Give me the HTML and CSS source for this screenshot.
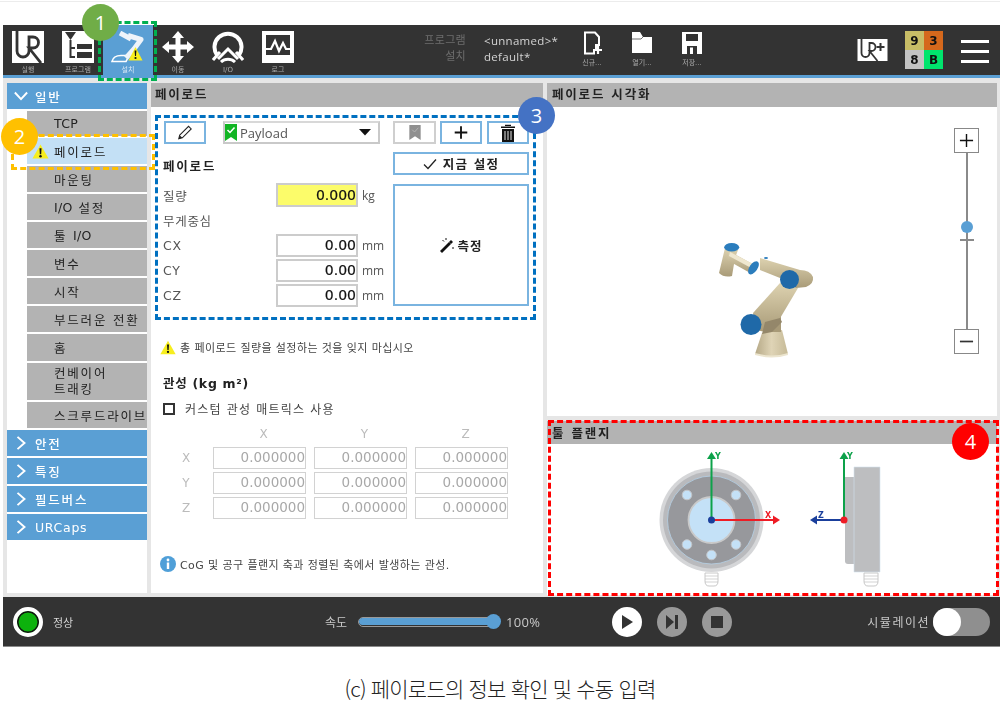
FILE: index.html
```html
<!DOCTYPE html>
<html lang="ko">
<head>
<meta charset="utf-8">
<title>페이로드</title>
<link rel="stylesheet" href="styles.css">
</head>
<body>
<svg class="defs" width="0" height="0">
  <symbol id="warn" viewBox="0 0 18 16">
    <path d="M9 0.500 L17.600 15.500 H0.400 Z" fill="#f7ee1e"/>
    <path d="M7.900 4.600 H10.100 L9.700 10.800 H8.300 Z" fill="#111"/>
    <circle cx="9" cy="13" r="1.300" fill="#111"/>
  </symbol>
  <linearGradient id="tan" x1="0" y1="0" x2="0" y2="1">
    <stop offset="0" stop-color="#ddd2b0"/><stop offset="1" stop-color="#a99b78"/>
  </linearGradient>
  <linearGradient id="tanbase" x1="0" y1="0" x2="1" y2="0">
    <stop offset="0" stop-color="#b5a886"/><stop offset="0.5" stop-color="#dfd4b6"/><stop offset="1" stop-color="#c6ba97"/>
  </linearGradient>
</svg>

<div class="page">
  <div class="app">
    <header class="topbar">
      <nav class="tabs">
        <div class="tab">
          <svg class="tab-icon" viewBox="0 0 32 32"><path d="M0 0H32V32H0Z" fill="#fff"/><path d="M5 -1V20a6 6 0 0 0 12 0V6H21a5.500 5.500 0 0 1 0 11H17L29 32" fill="none" stroke="#333" stroke-width="2.800"/></svg>
          <span>실행</span>
        </div>
        <div class="tab">
          <svg class="tab-icon" viewBox="0 0 32 32"><path d="M0 0H32V32H0Z" fill="#fff"/><path d="M3 1H14L8.500 9Z" fill="#333"/><path d="M8.500 9V26H13M8.500 17H13" fill="none" stroke="#333" stroke-width="2"/><path d="M15 13H30V18H15ZM15 21H30V27H15Z" fill="#333"/></svg>
          <span>프로그램</span>
        </div>
        <div class="tab tab-active">
          <svg class="tab-icon install-icon" viewBox="0 0 34 32"><path d="M1 30.500C2 26 5 24.500 10 24.500H18L15 30.500Z" fill="none" stroke="#fff" stroke-width="1.600"/><path d="M9 2L20 8M17 4.500L30 8.500L23 18L15 27" fill="none" stroke="#eef4fa" stroke-width="5" stroke-linejoin="round"/><path d="M24.500 16L31.500 29.500H17.500Z" fill="#f7ee1e"/><path d="M23.600 19.500H25.400L25 25H24Z" fill="#111"/><circle cx="24.500" cy="27" r="1.100" fill="#111"/></svg>
          <span>설치</span>
        </div>
        <div class="tab">
          <svg class="tab-icon" viewBox="0 0 32 32"><path d="M16 0L22 7H18.500V13.500H25V10L32 16L25 22V18.500H18.500V25H22L16 32L10 25H13.500V18.500H7V22L0 16L7 10V13.500H13.500V7H10Z" fill="#fff"/></svg>
          <span>이동</span>
        </div>
        <div class="tab">
          <svg class="tab-icon" viewBox="0 0 32 32"><path d="M5 24A13.500 13.500 0 1 1 27 24" fill="none" stroke="#fff" stroke-width="4"/><path d="M1 29L8 21M31 29L24 21M6 28L16 18L26 28" fill="none" stroke="#fff" stroke-width="3"/><path d="M9 31a10 10 0 0 1 14 0" fill="none" stroke="#fff" stroke-width="3"/></svg>
          <span>I/O</span>
        </div>
        <div class="tab">
          <svg class="tab-icon" viewBox="0 0 32 32"><path d="M0 0H32V32H0Z" fill="#fff"/><path d="M4 4H28V28H4Z" fill="#333"/><path d="M4 18H9L13 10L17 20L21 12L24 18H28" fill="none" stroke="#fff" stroke-width="2.200"/><path d="M4 24H28V28H4Z" fill="#fff"/></svg>
          <span>로그</span>
        </div>
      </nav>
      <div class="program-info">
        <span class="info-key">프로그램</span><span class="info-val">&lt;unnamed&gt;*</span>
        <span class="info-key">설치</span><span class="info-val">default*</span>
      </div>
      <div class="files">
        <div class="file">
          <svg class="file-icon" viewBox="0 0 24 24"><path d="M5 1.500H15L19 6V14H16V19H14V22.500H5Z" fill="none" stroke="#fff" stroke-width="2"/><path d="M18 15V23M14 19H22" stroke="#fff" stroke-width="2.200"/></svg>
          <span>신규...</span>
        </div>
        <div class="file">
          <svg class="file-icon" viewBox="0 0 24 24"><path d="M2 1H10L13 6H22V22H2Z" fill="#fff"/><path d="M13 6L11 8H2" fill="none" stroke="#333" stroke-width="0.700"/></svg>
          <span>열기...</span>
        </div>
        <div class="file">
          <svg class="file-icon" viewBox="0 0 24 24"><path d="M2 1H22V23H2Z" fill="#fff"/><path d="M6 3H18V10H6Z" fill="#333"/><path d="M7 15H17V23H7Z" fill="#333"/><path d="M10 16.500H13V23H10Z" fill="#fff"/></svg>
          <span>저장...</span>
        </div>
      </div>
      <svg class="urplus" viewBox="0 0 30 24"><path d="M0 1H30V23H0Z" fill="#fff"/><path d="M4 0V15a4 4 0 0 0 8 0V5H14a4 4 0 0 1 0 8H12L20 23" fill="none" stroke="#333" stroke-width="1.800"/><path d="M23 5V13M19 9H27" stroke="#333" stroke-width="2"/></svg>
      <div class="status-grid">
        <span class="cell c-olive">9</span><span class="cell c-orange">3</span>
        <span class="cell c-gray">8</span><span class="cell c-green">B</span>
      </div>
      <div class="burger"><i></i><i></i><i></i></div>
    </header>

    <main class="main">
      <aside class="sidebar">
        <div class="group group-open"><svg class="chev" viewBox="0 0 16 16"><path d="M1 4L8 11.500L15 4" fill="none" stroke="#fff" stroke-width="2.200"/></svg><span>일반</span></div>
        <div class="item item-first"><span class="lat">TCP</span></div>
        <div class="item item-active"><svg class="item-warn"><use href="#warn"/></svg>페이로드</div>
        <div class="item">마운팅</div>
        <div class="item"><span class="lat">I/O</span>&nbsp;설정</div>
        <div class="item">툴&nbsp;<span class="lat">I/O</span></div>
        <div class="item">변수</div>
        <div class="item">시작</div>
        <div class="item">부드러운 전환</div>
        <div class="item item-home">홈</div>
        <div class="item item-tall">컨베이어<br>트래킹</div>
        <div class="item item-nowrap">스크루드라이브</div>
        <div class="group"><svg class="chev" viewBox="0 0 16 16"><path d="M4 1L12 8L4 15" fill="none" stroke="#fff" stroke-width="2.200"/></svg><span>안전</span></div>
        <div class="group"><svg class="chev" viewBox="0 0 16 16"><path d="M4 1L12 8L4 15" fill="none" stroke="#fff" stroke-width="2.200"/></svg><span>특징</span></div>
        <div class="group"><svg class="chev" viewBox="0 0 16 16"><path d="M4 1L12 8L4 15" fill="none" stroke="#fff" stroke-width="2.200"/></svg><span>필드버스</span></div>
        <div class="group"><svg class="chev" viewBox="0 0 16 16"><path d="M4 1L12 8L4 15" fill="none" stroke="#fff" stroke-width="2.200"/></svg><span class="lat-group">URCaps</span></div>
      </aside>

      <section class="panel panel-form">
        <h2 class="panel-title">페이로드</h2>
        <div class="form">
          <div class="toolbar">
            <button class="btn btn-pencil"><svg class="ico" viewBox="0 0 18 18"><path d="M3 12L13 2L16 5L6 15L2 16Z" fill="none" stroke="#222" stroke-width="1.200"/><path d="M2 16L3 12L6 15Z" fill="#222"/></svg></button>
            <div class="select">
              <svg class="flag" viewBox="0 0 12 17"><path d="M0 0H12V17L6 13L0 17Z" fill="#12b524"/><path d="M2.500 6L5 8.500L9.500 3.500" fill="none" stroke="#fff" stroke-width="1.500"/></svg>
              <span class="select-text">Payload</span>
              <svg class="caret" viewBox="0 0 12 7"><path d="M0 0H12L6 6.500Z" fill="#111"/></svg>
            </div>
            <button class="btn btn-disabled btn-a"><svg class="ico" viewBox="0 0 14 18"><path d="M1 1H13V17L7 13L1 17Z" fill="#8f8f8f"/><path d="M4 6L6.500 8.500L10.500 4" fill="none" stroke="#b5b5b5" stroke-width="1"/></svg></button>
            <button class="btn btn-b"><svg class="ico" viewBox="0 0 14 14"><path d="M7 1.500V12.500M1.500 7H12.500" stroke="#111" stroke-width="1.600"/></svg></button>
            <button class="btn btn-b btn-trash"><svg class="ico ico-trash" viewBox="0 0 16 18"><path d="M5 2H11V0.800H5ZM1 2.500H15V4H1Z" fill="#111"/><path d="M2 5H14V18H2Z" fill="#111"/><path d="M5 7V16M8 7V16M11 7V16" stroke="#fff" stroke-width="0.900"/></svg></button>
          </div>
          <div class="form-body">
            <div class="form-left">
              <h3 class="sub-title">페이로드</h3>
              <div class="row row-mass"><label class="lbl">질량</label><span class="field field-warn">0.000</span><span class="unit">kg</span></div>
              <div class="lbl row-plain">무게중심</div>
              <div class="row row-tight"><label class="lbl">CX</label><span class="field field-coord">0.00</span><span class="unit">mm</span></div>
              <div class="row row-tight"><label class="lbl">CY</label><span class="field field-coord">0.00</span><span class="unit">mm</span></div>
              <div class="row row-tight"><label class="lbl">CZ</label><span class="field field-coord">0.00</span><span class="unit">mm</span></div>
            </div>
            <div class="form-right">
              <button class="btn btn-now"><svg class="check" viewBox="0 0 14 12"><path d="M1 6.500L5 10.500L13 1.500" fill="none" stroke="#222" stroke-width="1.300"/></svg>지금 설정</button>
              <button class="btn btn-measure"><svg class="wand" viewBox="0 0 16 16"><path d="M1 14L10 5L12 7L3 16Z" fill="#111"/><path d="M10 5L12 3L14 5L12 7Z" fill="#111"/><path d="M7 1V3M3.500 3L5 4.500M14 10V12" stroke="#111" stroke-width="1"/></svg>측정</button>
            </div>
          </div>
          <div class="note note-warn"><svg class="note-icon"><use href="#warn"/></svg>총 페이로드 질량을 설정하는 것을 잊지 마십시오</div>
          <h3 class="sub-title inertia-title">관성 (kg m²)</h3>
          <div class="check-row"><span class="checkbox"></span>커스텀 관성 매트릭스 사용</div>
          <div class="matrix">
            <span></span><span class="axis axis-top">X</span><span class="axis axis-top">Y</span><span class="axis axis-top">Z</span>
            <span class="axis axis-side">X</span><span class="cell-in">0.000000</span><span class="cell-in">0.000000</span><span class="cell-in">0.000000</span>
            <span class="axis axis-side">Y</span><span class="cell-in">0.000000</span><span class="cell-in">0.000000</span><span class="cell-in">0.000000</span>
            <span class="axis axis-side">Z</span><span class="cell-in">0.000000</span><span class="cell-in">0.000000</span><span class="cell-in">0.000000</span>
          </div>
          <div class="note note-info"><svg class="note-icon" viewBox="0 0 16 16"><circle cx="8" cy="8" r="8" fill="#4f9fd8"/><circle cx="8" cy="4" r="1.400" fill="#fff"/><path d="M6.800 6.500H9.200V13H6.800Z" fill="#fff"/></svg>CoG 및 공구 플랜지 축과 정렬된 축에서 발생하는 관성.</div>
        </div>
      </section>

      <div class="right-col">
        <section class="panel panel-view">
          <h2 class="panel-title">페이로드 시각화</h2>
          <div class="viewer">
            <svg class="robot" viewBox="715 240 105 125">
              <path d="M762 333L782 330L788 354Q772 359 755 354Z" fill="url(#tanbase)"/>
              <path d="M755 353Q772 358 788 353V355Q772 360 755 355Z" fill="#ece5cf"/>
              <path d="M775 312H781V332H770Z" fill="#a89a78"/>
              <path d="M753 313L780 283L798 288L779 320L772 330Q762 334 755 328Z" fill="url(#tan)"/>
              <path d="M765 322L780 318L782 322L772 332L762 334Z" fill="#94876a"/>
              <path d="M760 258L800 270Q810 270 813 277Q814 284 806 287L796 288L780 278L760 270Z" fill="url(#tan)"/>
              <path d="M725 248L738 250L735 258L732 276Q724 278 719 273Z" fill="url(#tan)"/>
              <path d="M729 251L758 267L752 274L727 260Z" fill="url(#tan)"/>
              <path d="M730 252L755 265L753 269L729 256Z" fill="#efe7cf"/>
              <ellipse cx="731.700" cy="247.300" rx="7.500" ry="4.300" fill="#2b7dbd"/>
              <ellipse cx="753.500" cy="267.800" rx="4" ry="7.500" transform="rotate(35 753.500 267.800)" fill="#2b7dbd"/>
              <ellipse cx="766" cy="258" rx="2" ry="1" fill="#2b7dbd"/>
              <circle cx="789.500" cy="279.500" r="9.500" fill="#1f69a8"/>
              <circle cx="751" cy="324.500" r="10.500" fill="#1f69a8"/>
            </svg>
            <div class="zoom">
              <span class="zoom-btn"><svg class="zoom-glyph" viewBox="0 0 16 16"><path d="M8 1V15M1 8H15" stroke="#111" stroke-width="1.500"/></svg></span>
              <div class="zoom-track"><i class="zoom-knob"></i><i class="zoom-tick"></i></div>
              <span class="zoom-btn"><svg class="zoom-glyph" viewBox="0 0 16 16"><path d="M1 8H15" stroke="#333" stroke-width="1.800"/></svg></span>
            </div>
          </div>
        </section>
        <section class="panel panel-flange">
          <h2 class="panel-title">툴 플랜지</h2>
          <svg class="flange" viewBox="547 445 450 151">
            <circle cx="711.500" cy="521" r="52" fill="#d5d6d8"/>
            <circle cx="711.500" cy="521" r="48.500" fill="#b9babd"/>
            <circle cx="711.500" cy="521" r="44" fill="#97989c" stroke="#b5d0e6" stroke-width="0.800"/>
            <circle cx="711.500" cy="521" r="23" fill="#c4e1f7" stroke="#c9c9c9" stroke-width="1.800"/>
            <g fill="#c4e1f7" stroke="#c4c6c9" stroke-width="1">
              <circle cx="687" cy="496" r="4.800"/><circle cx="736" cy="496" r="4.800"/>
              <circle cx="687" cy="545.500" r="4.800"/><circle cx="736" cy="545.500" r="4.800"/>
              <circle cx="711.500" cy="556" r="4.800"/>
            </g>
            <path d="M705 574H718V582Q718 587 714 587H709Q705 587 705 582Z" fill="#fff" stroke="#c8c8c8"/>
            <path d="M705 577H718M705 580H718M705 583H718" stroke="#c8c8c8" stroke-width="0.800"/>
            <path d="M845 478H854V565H848Q845 565 845 562Z" fill="#bdbec0"/>
            <path d="M854 468H880V573H854Z" fill="#bdbec0" stroke="#d3e2ee" stroke-width="0.600"/>
            <path d="M864 574H878V582Q878 587 874 587H868Q864 587 864 582Z" fill="#fff" stroke="#c8c8c8"/>
            <path d="M864 577H878M864 580H878M864 583H878" stroke="#c8c8c8" stroke-width="0.800"/>
            <path d="M711.500 521V458" stroke="#0da24a" stroke-width="2"/><path d="M711.500 453L716 460H707Z" fill="#0da24a"/>
            <path d="M711.500 521H775" stroke="#ee1c25" stroke-width="2"/><path d="M780 521L773 516.500V525.500Z" fill="#ee1c25"/>
            <circle cx="711.500" cy="521" r="3.500" fill="#1a3f9c"/>
            <path d="M844 521V458" stroke="#0da24a" stroke-width="2"/><path d="M844 453L848.500 460H839.500Z" fill="#0da24a"/>
            <path d="M844 521H816" stroke="#1a3f9c" stroke-width="2"/><path d="M810 521L817 516.500V525.500Z" fill="#1a3f9c"/>
            <circle cx="844" cy="521" r="3.500" fill="#ee1c25"/>
            <text x="715" y="460" class="ax ax-y">Y</text>
            <text x="847" y="460" class="ax ax-y">Y</text>
            <text x="765" y="519" class="ax ax-x">X</text>
            <text x="818" y="519" class="ax ax-z">Z</text>
          </svg>
        </section>
      </div>
    </main>

    <footer class="bottombar">
      <div class="state"><span class="led"></span><span class="state-text">정상</span></div>
      <div class="speed">
        <span class="speed-label">속도</span>
        <div class="speed-track"><i class="speed-fill"></i><i class="speed-knob"></i></div>
        <span class="speed-val">100%</span>
      </div>
      <div class="controls">
        <span class="ctl ctl-on"><svg class="ctl-glyph" viewBox="0 0 14 14"><path d="M2 0L13 7L2 14Z" fill="#333"/></svg></span>
        <span class="ctl"><svg class="ctl-glyph" viewBox="0 0 14 14"><path d="M1 0L9 7L1 14Z" fill="#333"/><path d="M10 0H13V14H10Z" fill="#333"/></svg></span>
        <span class="ctl"><svg class="ctl-glyph" viewBox="0 0 14 14"><path d="M1 1H13V13H1Z" fill="#333"/></svg></span>
      </div>
      <div class="sim"><span class="sim-label">시뮬레이션</span><span class="toggle"><i class="toggle-knob"></i></span></div>
    </footer>
  </div>
  <p class="caption">(c) 페이로드의 정보 확인 및 수동 입력</p>

  <span class="mark mark-green"></span>
  <span class="mark mark-orange"></span>
  <span class="mark mark-blue"></span>
  <span class="mark mark-red"></span>
  <span class="badge badge-1">1</span>
  <span class="badge badge-2">2</span>
  <span class="badge badge-3">3</span>
  <span class="badge badge-4">4</span>
</div>
</body>
</html>
```
FILE: styles.css
```css
* { box-sizing: border-box; }
html, body { margin: 0; padding: 0; background: #fff; }
body { font-family: "DejaVu Sans", "Noto Sans CJK KR", sans-serif; color: #333; overflow: hidden; }
.defs { position: absolute; }
i { display: block; }
h2, h3, p { margin: 0; }
button { font-family: inherit; padding: 0; margin: 0; background: #fff; }

.page { position: relative; width: 1000px; height: 727px; padding: 25px 0 0 3px; overflow: hidden; background: linear-gradient(#fff 1px, #ececec 1px, #ececec 2px, #fff 2px); }
.app { width: 997px; filter: blur(0.35px); }

/* top bar */
.topbar { height: 53px; background: #333; border-bottom: 3px solid #5a9fd4; display: flex; align-items: flex-start; }
.tabs { display: flex; flex: none; }
.tab { width: 50px; height: 50px; display: flex; flex-direction: column; align-items: center; padding-top: 6px; color: #a9a9a9; font-size: 7px; line-height: 9px; gap: 3px; }
.tab-active { background: #5a9fd4; height: 53px; color: #d6e6f3; }
.tab-icon { width: 32px; height: 32px; flex: none; }
.install-icon { width: 34px; }
.program-info { margin-left: 80px; width: 184px; margin-top: 8px; display: grid; grid-template-columns: 83px auto; column-gap: 18px; align-content: start; font-size: 11px; line-height: 16px; letter-spacing: 0.300px; }
.info-key { color: #6e6e6e; text-align: right; }
.info-val { color: #d4d4d4; font-size: 11.500px; font-family: "Open Sans", "Noto Sans CJK KR", sans-serif; }
.files { display: flex; flex: none; }
.file { width: 50px; display: flex; flex-direction: column; align-items: center; color: #a9a9a9; font-size: 7px; line-height: 9px; padding-top: 6px; gap: 4px; }
.file-icon { width: 24px; height: 24px; }
.urplus { width: 31px; height: 24px; margin: 13px 0 0 140px; flex: none; }
.status-grid { margin: 6px 0 0 17px; width: 38px; height: 38px; display: grid; grid-template-columns: 1fr 1fr; grid-template-rows: 1fr 1fr; flex: none; }
.cell { display: flex; align-items: center; justify-content: center; font-size: 12px; font-weight: 700; color: #111; }
.c-olive { background: #c8bd66; }
.c-orange { background: #d5681c; }
.c-gray { background: #c3c3c3; }
.c-green { background: #00e56d; }
.burger { margin: 15px 0 0 18px; width: 28px; display: flex; flex-direction: column; gap: 7px; flex: none; }
.burger i { height: 3px; background: #fff; }

/* main */
.main { height: 519px; background: #e6e6e6; display: flex; padding: 5px 3px 4px 4px; gap: 4px; align-items: stretch; }
.sidebar { width: 140px; background: #fff; flex: none; display: flex; flex-direction: column; gap: 2px; }
.group { height: 26px; background: #5a9fd4; color: #fff; display: flex; align-items: center; font-size: 12.500px; font-weight: 500; letter-spacing: 1.800px; padding-left: 7px; gap: 7px; flex: none; }
.lat-group { letter-spacing: 0.700px; }
.chev { width: 14px; height: 14px; flex: none; }
.item { height: 26px; margin-left: 20px; background: #b3b3b3; color: #222; display: flex; align-items: center; padding-left: 27px; font-size: 12.500px; letter-spacing: 1.800px; position: relative; flex: none; }
.item-first { height: 25px; }
.lat { letter-spacing: 0.300px; }
.item-active { background: #c3e0f5; }
.item-warn { position: absolute; left: 5px; top: 6px; width: 17px; height: 15px; }
.item-home { height: 27px; }
.item-tall { height: 37px; line-height: 15.500px; }
.item-nowrap { white-space: nowrap; }

.panel { background: #fff; display: flex; flex-direction: column; }
.panel-form { width: 392px; flex: none; }
.panel-title { height: 24px; flex: none; background: #b3b3b3; color: #222; font-size: 12.500px; font-weight: 700; line-height: 24px; padding-left: 4px; letter-spacing: 1.800px; }
.form { padding: 14px 0 0 12px; }
.toolbar { display: flex; height: 23px; margin-left: 1px; width: 366px; gap: 4px; }
.btn { border: 2px solid #7ab4e0; display: flex; align-items: center; justify-content: center; color: #222; }
.btn-pencil { width: 42px; margin-right: 13px; }
.ico { width: 16px; height: 17px; }
.ico-trash { height: 18px; }
.select { width: 157px; margin-right: 9px; border: 2px solid #c9c9c9; border-top-color: #d8d8d8; display: flex; align-items: center; background: #fff; }
.flag { width: 12px; height: 17px; flex: none; }
.select-text { font-family: "Open Sans", sans-serif; font-size: 13px; color: #555; margin-left: 3px; }
.caret { width: 12px; height: 7px; margin-left: auto; margin-right: 7px; }
.btn-a { width: 43px; border-color: #cfcfcf; }
.btn-b { width: 42px; }
.btn-trash { margin-left: 1px; }
.form-body { display: flex; margin-top: 8px; gap: 8px; align-items: flex-start; }
.form-left { width: 222px; flex: none; }
.sub-title { font-size: 12.500px; font-weight: 700; color: #222; letter-spacing: 1.800px; line-height: 30px; height: 26px; }
.row { display: flex; align-items: center; height: 23px; margin-top: 2px; }
.row-mass { height: 24px; margin-top: 5px; }
.row-tight { margin-top: 2px; }
.lbl { width: 113px; font-size: 12.500px; color: #555; flex: none; letter-spacing: 0.700px; }
.row-plain { height: 25px; line-height: 29px; width: auto; }
.field { width: 82px; height: 100%; border: 2px solid #ccc; background: #fff; text-align: right; font-size: 14px; line-height: 19px; color: #111; flex: none; letter-spacing: 0; -webkit-text-stroke: 0.200px #111; }
.field-warn { background: #fcfc6a; line-height: 20px; }
.unit { margin-left: 4px; font-size: 12px; color: #555; font-family: "Open Sans", sans-serif; }
.form-right { width: 136px; flex: none; display: flex; flex-direction: column; gap: 9px; }
.btn-now { height: 23px; font-size: 12.500px; font-weight: 700; letter-spacing: 1.200px; gap: 6px; }
.check { width: 14px; height: 12px; }
.btn-measure { height: 122px; font-size: 12.500px; font-weight: 700; gap: 2px; letter-spacing: 1px; }
.wand { width: 16px; height: 16px; }
.note { display: flex; align-items: center; font-size: 11px; color: #444; letter-spacing: 0.400px; margin-left: -3px; height: 20px; gap: 4px; }
.note-warn { margin-top: 30px; }
.note-icon { width: 16px; height: 15px; flex: none; }
.note-info { margin-top: 35px; }
.note-info .note-icon { height: 16px; }
.inertia-title { margin-top: 14px; height: 25px; line-height: 25px; letter-spacing: 0.700px; }
.check-row { display: flex; align-items: center; height: 23px; font-size: 12px; color: #444; letter-spacing: 1.200px; margin-top: 1px; gap: 10px; }
.checkbox { width: 12px; height: 12px; border: 2px solid #333; flex: none; }
.matrix { display: grid; grid-template-columns: 42px 93px 93px 93px; column-gap: 8px; row-gap: 3px; grid-template-rows: 21px 22px 22px 22px; margin-top: 3px; }
.axis { color: #bbb; font-size: 12px; display: flex; align-items: center; justify-content: center; }
.axis-top { padding-left: 8px; }
.axis-side { padding-left: 4px; }
.cell-in { border: 1.500px solid #d2d2d2; text-align: right; color: #a8a8a8; font-size: 13.500px; line-height: 19px; }

.right-col { width: 450px; flex: none; display: flex; flex-direction: column; gap: 5px; }
.right-col .panel-title { padding-left: 5px; }
.panel-view { height: 333px; flex: none; }
.viewer { flex: 1; display: flex; align-items: flex-start; }
.robot { width: 105px; height: 125px; margin: 133px 0 0 168px; flex: none; }
.zoom { margin: 21px 18px 0 auto; width: 25px; display: flex; flex-direction: column; flex: none; }
.zoom-btn { width: 25px; height: 25px; border: 1.500px solid #888; display: flex; align-items: center; justify-content: center; background: #fff; }
.zoom-glyph { width: 15px; height: 15px; }
.zoom-track { position: relative; height: 176px; width: 2px; background: #8a8a8a; margin-left: 12px; }
.zoom-knob { position: absolute; left: -5px; top: 68px; width: 12px; height: 12px; border-radius: 50%; background: #5a9fd4; }
.zoom-tick { position: absolute; left: -6px; top: 86px; width: 14px; height: 1.500px; background: #8a8a8a; }
.panel-flange { flex: 1; }
.panel-flange .panel-title { height: 23px; line-height: 25px; }
.flange { width: 450px; height: 151px; display: block; }
.ax { font-size: 8px; font-weight: 700; font-family: "DejaVu Sans", sans-serif; }
.ax-y { fill: #0da24a; }
.ax-x { fill: #ee1c25; }
.ax-z { fill: #1a3f9c; }

/* bottom bar */
.bottombar { height: 50px; background: #333; border-bottom: 1px solid #8a8a8a; display: flex; align-items: center; }
.state { display: flex; align-items: center; width: 322px; flex: none; padding-left: 10px; }
.led { width: 30px; height: 30px; border-radius: 50%; background: #0db20d; border: 4px solid #fff; box-shadow: inset 0 0 0 1.500px #111; flex: none; }
.state-text { color: #d8d8d8; font-size: 11px; margin-left: 10px; }
.speed { display: flex; align-items: center; width: 287px; flex: none; color: #c8c8c8; }
.speed-label { font-size: 12px; width: 33px; flex: none; }
.speed-track { position: relative; width: 140px; height: 10px; border: 1.500px solid #999; border-radius: 5px; flex: none; }
.speed-fill { height: 7px; border-radius: 4px; background: #5a9fd4; }
.speed-knob { position: absolute; right: -4px; top: -4px; width: 15px; height: 15px; border-radius: 50%; background: #5a9fd4; }
.speed-val { font-size: 13px; margin-left: 8px; font-family: "Open Sans", sans-serif; letter-spacing: 0.300px; }
.controls { display: flex; gap: 15px; flex: none; }
.ctl { width: 30px; height: 30px; border-radius: 50%; background: #999; display: flex; align-items: center; justify-content: center; }
.ctl-on { background: #fff; }
.ctl-glyph { width: 14px; height: 14px; }
.sim { margin-left: auto; margin-right: 10px; display: flex; align-items: center; gap: 3px; }
.sim-label { color: #c8c8c8; font-size: 12px; letter-spacing: 1.500px; }
.toggle { width: 57px; height: 28px; border-radius: 14px; background: #8f8f8f; display: block; position: relative; }
.toggle-knob { position: absolute; left: 0; top: 0; width: 28px; height: 28px; border-radius: 50%; background: #fff; }

.caption { margin-top: 28px; text-align: center; font-family: "Noto Sans CJK KR", sans-serif; font-weight: 300; font-size: 21px; line-height: 26px; color: #222; letter-spacing: -0.800px; width: 994px; }

/* annotations over the screenshot */
.mark { position: absolute; border-style: dashed; border-width: 3px; }
.mark-green { left: 98px; top: 21px; width: 59px; height: 60px; border-color: #00b050; }
.mark-orange { left: 11px; top: 134px; width: 144px; height: 36px; border-color: #ffc000; }
.mark-blue { left: 155px; top: 115px; width: 381px; height: 205px; border-color: #0070c0; }
.mark-red { left: 548px; top: 420px; width: 451px; height: 176px; border-color: #ff0000; }
.badge { position: absolute; width: 37px; height: 37px; border-radius: 50%; color: #fff; font-family: "Open Sans", sans-serif; font-size: 20px; line-height: 37px; text-align: center; }
.badge-1 { left: 82px; top: 4px; background: #70ad47; }
.badge-2 { left: 1px; top: 118px; background: #ffc000; }
.badge-3 { left: 518px; top: 97px; background: #4472c4; }
.badge-4 { left: 952px; top: 423px; background: #ff0000; }
```
